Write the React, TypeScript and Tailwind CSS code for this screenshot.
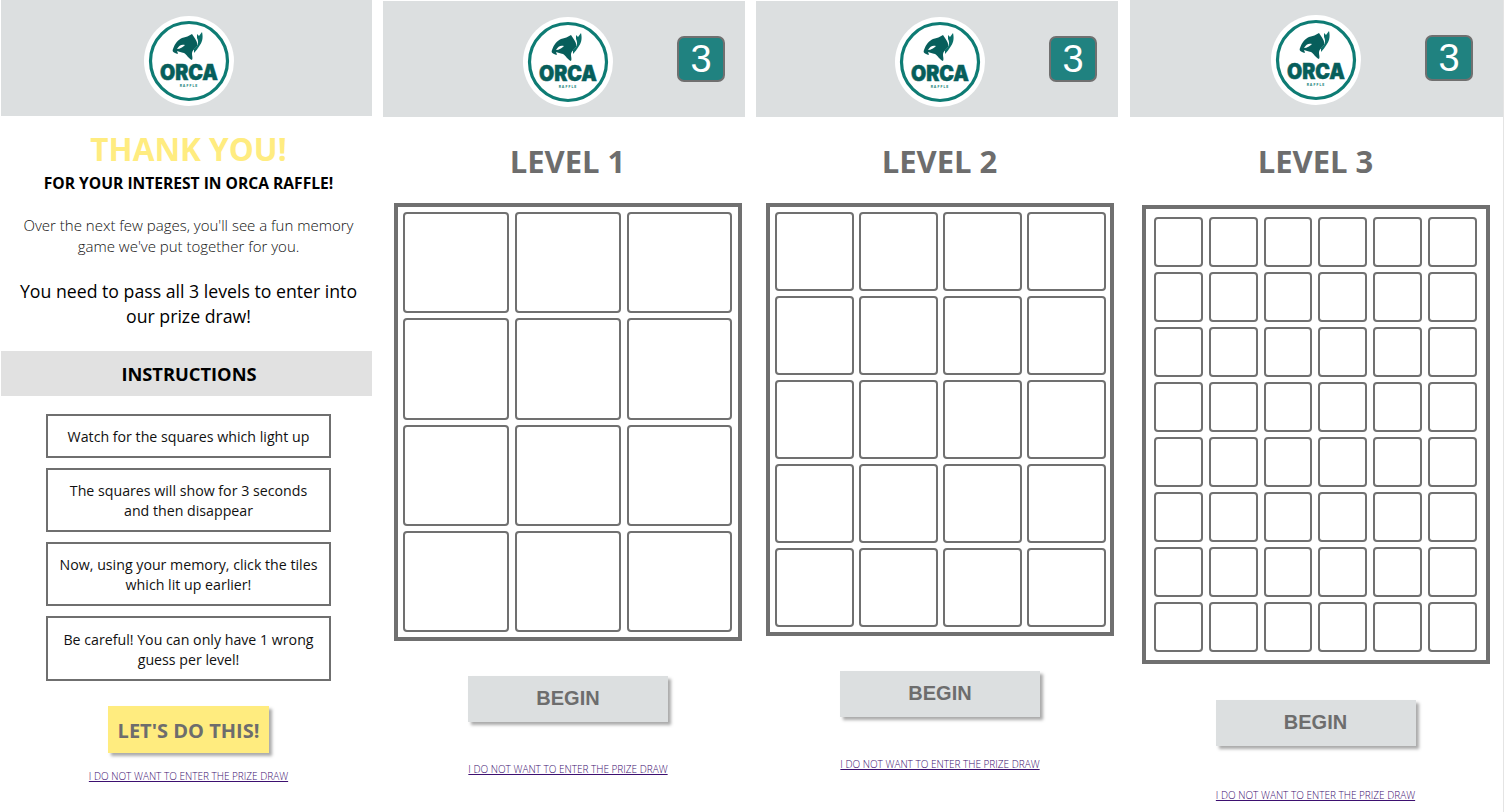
import React from "react";

const sans = "font-['Open_Sans',sans-serif]";

function Logo({ className = "" }: { className?: string }) {
  return (
    <div className={`w-[90px] h-[90px] rounded-full bg-white shrink-0 ${className}`}>
      <svg width="90" height="90" viewBox="0 0 90 90">
        <circle cx="45" cy="45" r="38.5" fill="none" stroke="#0e7c74" strokeWidth="3.2" />
        {/* orca */}
        <path
          d="M29 33C31 27 34 24 38 22C42 21 45 20 48 18L50 21C52 24 54 27 53 30C51 33 48 34 48 38C48 40 49 42 48 44C45 43 43 39 40 37C37 36 35 36 33 35C35 39 33 38 31 37C29 36 28 35 29 33Z"
          fill="#075e5b"
        />
        <path d="M50 33C54 30 55 26 53 22C53 20 53 19 53 18L55 20L58 16C59 20 59 25 56 29C54 32 52 35 50 37Z" fill="#0b6f69" />
        <path d="M33 33C35 29 38 28 41 29C39 31 36 33 33 33Z" fill="#ffffff" />
        <text
          x="16"
          y="64"
          textLength="58"
          lengthAdjust="spacingAndGlyphs"
          fill="#075e5b"
          stroke="#075e5b"
          strokeWidth="0.5"
          fontFamily="Inter, sans-serif"
          fontWeight="900"
          fontSize="21"
        >
          ORCA
        </text>
        <text x="45" y="71" textAnchor="middle" fill="#0e7c74" fontFamily="Inter, sans-serif" fontWeight="700" fontSize="3.4" letterSpacing="1">
          RAFFLE
        </text>
      </svg>
    </div>
  );
}

function SkipLink({ className = "" }: { className?: string }) {
  return (
    <a className={`block w-fit mx-auto ${sans} font-light text-[10px] leading-[14px] text-[#3d1070] underline whitespace-nowrap ${className}`}>
      I DO NOT WANT TO ENTER THE PRIZE DRAW
    </a>
  );
}

function BeginButton({ className = "" }: { className?: string }) {
  return (
    <button className={`block mx-auto w-[200px] h-[46px] pb-[3px] bg-[#dcdfe0] shadow-[3px_3px_3px_#aaaaaa] font-['Liberation_Sans',sans-serif] font-bold text-[20px] text-[#6d6d6d] ${className}`}>
      BEGIN
    </button>
  );
}

function Badge({ className = "" }: { className?: string }) {
  return (
    <div className={`w-[48px] h-[46px] rounded-[7px] border-2 border-[#707070] bg-[#208280] flex items-center justify-center font-['Liberation_Sans',sans-serif] text-[38px] leading-none text-white ${className}`}>
      3
    </div>
  );
}

function Tiles({ count, className }: { count: number; className: string }) {
  return (
    <div className={`border-4 border-[#707070] grid ${className}`}>
      {Array.from({ length: count }).map((_, i) => (
        <div key={i} className="border-2 border-[#707070] rounded-[4px] bg-white" />
      ))}
    </div>
  );
}

function Intro() {
  const steps = [
    { text: "Watch for the squares which light up", h: "h-[44px]" },
    { text: "The squares will show for 3 seconds and then disappear", h: "h-[64px]" },
    { text: "Now, using your memory, click the tiles which lit up earlier!", h: "h-[64px]" },
    { text: "Be careful! You can only have 1 wrong guess per level!", h: "h-[65px]" },
  ];

  return (
    <div className={`w-[372px] shrink-0 ${sans} text-center`}>
      <div className="h-[116px] bg-[#dcdfe0] pt-[16px] ml-[1px]">
        <Logo className="ml-[143px]" />
      </div>
      <div className="w-[377px]">
        <h1 className="mt-[13px] font-bold text-[31.5px] leading-[40px] text-[#ffec80]">THANK YOU!</h1>
        <h2 className="mt-[4px] font-bold text-[15.6px] leading-[21px] text-black">FOR YOUR INTEREST IN ORCA RAFFLE!</h2>
        <p className="mt-[21px] px-[16px] font-light text-[15px] leading-[21px] text-[#111111]">
          Over the next few pages, you'll see a fun memory game we've put together for you.
        </p>
        <p className="mt-[22px] px-[16px] text-[17.7px] leading-[25px] text-black">
          You need to pass all 3 levels to enter into our prize draw!
        </p>
      </div>
      <div className="mt-[22px] ml-[1px] h-[45px] bg-[#e1e1e1] flex items-center justify-center pl-[5px] font-bold text-[18.3px] text-black">
        INSTRUCTIONS
      </div>
      <div className="mt-[18px] ml-[46px] w-[285px] flex flex-col gap-[10px]">
        {steps.map((s) => (
          <div key={s.text} className={`${s.h} border-2 border-[#6f6f6f] flex items-center justify-center px-[10px] pt-[2px] text-[14.2px] leading-[20px] text-[#111111]`}>
            <span>{s.text}</span>
          </div>
        ))}
      </div>
      <button className="block ml-[108px] mt-[25px] w-[161px] h-[47px] pt-[2px] bg-[#ffec7f] shadow-[3px_3px_3px_#aaaaaa] font-bold text-[20px] whitespace-nowrap text-[#6d6d6d]">
        LET'S DO THIS!
      </button>
      <div className="w-[377px]">
        <SkipLink className="mt-[16px]" />
      </div>
    </div>
  );
}

export default function App() {
  return (
    <div className="w-[1504px] h-[812px] overflow-hidden bg-white flex border-r border-[#e4e4e4]">
      <Intro />

      {/* level 1 */}
      <div className={`ml-[11px] w-[370px] shrink-0 ${sans} text-center`}>
        <div className="mt-[1px] w-[362px] h-[116px] bg-[#dcdfe0] flex items-start pt-[16px] pl-[140px] gap-[64px]">
          <Logo />
          <Badge className="mt-[19px]" />
        </div>
        <h2 className="mt-[23px] pr-[1px] font-bold text-[31px] leading-[42px] text-[#6d6d6d]">LEVEL 1</h2>
        <Tiles
          count={12}
          className="mt-[21px] ml-[11px] w-[348px] h-[438px] pl-[5px] py-[5px] grid-cols-[106px_106px_105px] grid-rows-4 gap-x-[6px] gap-y-[5px]"
        />
        <BeginButton className="mt-[35px]" />
        <SkipLink className="mt-[40px]" />
      </div>

      {/* level 2 */}
      <div className={`ml-[3px] w-[362px] shrink-0 ${sans} text-center`}>
        <div className="mt-[1px] w-[362px] h-[116px] bg-[#dcdfe0] flex items-start pt-[16px] pl-[139px] gap-[64px]">
          <Logo />
          <Badge className="mt-[19px]" />
        </div>
        <h2 className="mt-[23px] ml-[5px] font-bold text-[31px] leading-[42px] text-[#6d6d6d]">LEVEL 2</h2>
        <Tiles
          count={20}
          className="mt-[21px] ml-[10px] w-[348px] h-[433px] pl-[5px] pr-[4px] py-[5px] grid-cols-4 grid-rows-5 gap-[5px]"
        />
        <BeginButton className="mt-[35px] relative left-[3px]" />
        <SkipLink className="mt-[40px] relative left-[3px]" />
      </div>

      {/* level 3 */}
      <div className={`ml-[12px] w-[373px] shrink-0 ${sans} text-center`}>
        <div className="h-[117px] bg-[#dcdfe0] flex items-start pt-[15px] pl-[141px] gap-[64px]">
          <Logo />
          <Badge className="mt-[20px]" />
        </div>
        <h2 className="mt-[23px] pr-[2px] font-bold text-[31px] leading-[42px] text-[#6d6d6d]">LEVEL 3</h2>
        <Tiles
          count={48}
          className="mt-[23px] ml-[12px] w-[348px] h-[459px] pl-[8px] pr-[9px] py-[8px] grid-cols-6 grid-rows-8 gap-x-[6px] gap-y-[5.5px]"
        />
        <BeginButton className="mt-[36px] relative -left-[1px]" />
        <SkipLink className="mt-[42px] relative -left-[1px]" />
      </div>
    </div>
  );
}
